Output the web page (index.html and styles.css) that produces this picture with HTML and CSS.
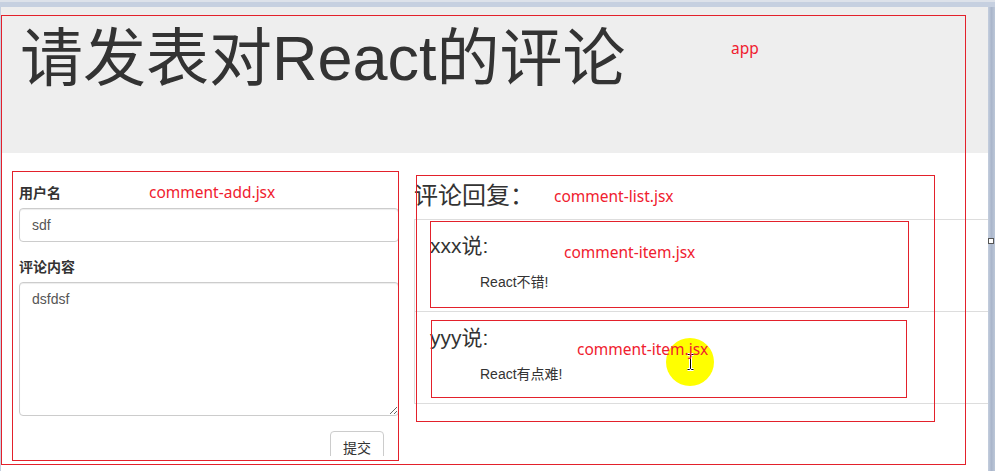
FILE: index.html
```html
<!DOCTYPE html>
<html lang="zh-CN">
<head>
<meta charset="utf-8">
<title>React 评论</title>
<link rel="stylesheet" href="styles.css">
</head>
<body>
  <div class="chrome-top"></div>
  <div class="viewport">
    <div class="page">
      <div class="jumbotron">
        <h1 class="title">请发表对React的评论</h1>
      </div>
      <div class="main">
        <form class="comment-add">
          <div class="form-group">
            <label class="form-label">用户名</label>
            <input class="form-control" type="text" value="sdf">
          </div>
          <div class="form-group">
            <label class="form-label">评论内容</label>
            <textarea class="form-control form-textarea">dsfdsf</textarea>
          </div>
          <div class="form-actions">
            <button class="btn" type="button">提交</button>
          </div>
        </form>
        <div class="comment-list">
          <h3 class="list-title">评论回复：</h3>
          <ul class="list-group">
            <li class="list-group-item">
              <h4 class="item-user">xxx说:</h4>
              <p class="item-text">React不错!</p>
            </li>
            <li class="list-group-item">
              <h4 class="item-user">yyy说:</h4>
              <p class="item-text">React有点难!</p>
            </li>
          </ul>
        </div>
      </div>
    </div>
    <div class="scrollbar"><span class="grip"></span></div>
  </div>

  <div class="annotations">
    <div class="cursor-spot">
      <svg width="9" height="18" viewBox="0 0 9 18">
        <path d="M1.5 1.5h2l1 1 1-1h2M4.5 2.5v13M1.5 16.5h2l1-1 1 1h2" stroke="#fff" stroke-width="3" fill="none"/>
        <path d="M1.5 1.5h2l1 1 1-1h2M4.5 2.5v13M1.5 16.5h2l1-1 1 1h2" stroke="#000" stroke-width="1" fill="none"/>
      </svg>
    </div>
    <div class="anno-box box-app"></div>
    <div class="anno-box box-add"></div>
    <div class="anno-box box-list"></div>
    <div class="anno-box box-item1"></div>
    <div class="anno-box box-item2"></div>
    <span class="anno-label label-app">app</span>
    <span class="anno-label label-add">comment-add.jsx</span>
    <span class="anno-label label-list">comment-list.jsx</span>
    <span class="anno-label label-item1">comment-item.jsx</span>
    <span class="anno-label label-item2">comment-item.jsx</span>
  </div>
</body>
</html>
```

FILE: styles.css
```css
* { box-sizing: border-box; }

html, body {
  margin: 0;
  padding: 0;
}

body {
  width: 995px;
  height: 471px;
  overflow: hidden;
  position: relative;
  background: #c6d0e0;
  font-family: "Liberation Sans", "Noto Sans CJK SC", sans-serif;
  color: #333;
}

.chrome-top {
  height: 7px;
  background: linear-gradient(#dde2ea 0, #dde2ea 2px, #c6d0e0 2px);
}

.viewport {
  display: flex;
  height: 464px;
  padding-left: 1px;
}

.page {
  width: 987px;
  flex-shrink: 0;
  background: #fff;
  overflow: hidden;
}

.jumbotron {
  height: 146px;
  background: #eee;
  padding: 17px 0 0 19px;
}

.title {
  margin: 0;
  font-size: 63px;
  line-height: 1.1;
  font-weight: 400;
  color: #333;
  white-space: nowrap;
}

.main {
  display: flex;
  height: 303px;
  overflow: hidden;
  padding-top: 30px;
}

.comment-add {
  width: 380px;
  flex-shrink: 0;
  margin: 0 0 0 18px;
}

.form-group {
  margin-bottom: 15px;
}

.form-label {
  display: block;
  font-size: 14px;
  line-height: 20px;
  font-weight: bold;
  color: #333;
  margin-bottom: 5px;
}

.form-control {
  display: block;
  width: 100%;
  height: 34px;
  padding: 6px 12px;
  font-family: "Liberation Sans", "Noto Sans CJK SC", sans-serif;
  font-size: 14px;
  line-height: 20px;
  color: #555;
  background: #fff;
  border: 1px solid #ccc;
  border-radius: 4px;
  box-shadow: inset 0 1px 1px rgba(0, 0, 0, .075);
  margin: 0;
}

.form-textarea {
  height: 134px;
}

.form-actions {
  display: flex;
  justify-content: flex-end;
  padding-right: 15px;
}

.btn {
  padding: 6px 12px;
  font-family: "Liberation Sans", "Noto Sans CJK SC", sans-serif;
  font-size: 14px;
  line-height: 20px;
  color: #333;
  background: #fff;
  border: 1px solid #ccc;
  border-radius: 4px;
}

.comment-list {
  flex: 1;
  margin-left: 15px;
  min-width: 0;
}

.list-title {
  margin: 0 0 10px;
  font-size: 24px;
  line-height: 1.1;
  font-weight: 400;
  color: #333;
  white-space: nowrap;
}

.list-group {
  list-style: none;
  margin: 0 -20px 0 0;
  padding: 0;
}

.list-group-item {
  height: 93px;
  margin-bottom: -1px;
  padding: 10px 15px;
  border: 1px solid #ddd;
}

.item-user {
  margin: 4px 0 0;
  font-size: 21px;
  line-height: 23px;
  font-weight: 400;
  color: #333;
}

.item-text {
  margin: 15px 0 0 50px;
  font-size: 14px;
  line-height: 20px;
  color: #333;
}

.scrollbar {
  width: 7px;
  flex-shrink: 0;
  padding-top: 231px;
  background: linear-gradient(to right, #c4cede, #aab6cb 50%, #bcc7d8);
}

.grip {
  display: block;
  width: 6px;
  height: 6px;
  background: #fff;
  border: 1px solid #555;
}

/* annotation overlay */
.annotations {
  position: absolute;
  left: 0;
  top: 0;
  width: 995px;
  height: 471px;
  pointer-events: none;
}

.anno-box {
  position: absolute;
  border: 1px solid #e3212b;
}

.box-app   { left: 1px;   top: 15px;  width: 965px; height: 450px; }
.box-add   { left: 12px;  top: 171px; width: 387px; height: 290px; }
.box-list  { left: 416px; top: 175px; width: 519px; height: 247px; }
.box-item1 { left: 430px; top: 221px; width: 479px; height: 87px; }
.box-item2 { left: 431px; top: 320px; width: 476px; height: 78px; }

.anno-label {
  position: absolute;
  font-family: "Noto Sans", sans-serif;
  font-size: 15.5px;
  line-height: 20px;
  color: #f0202e;
  white-space: nowrap;
}

.label-app   { left: 731px; top: 38px; }
.label-add   { left: 149px; top: 182px; }
.label-list  { left: 554px; top: 186px; }
.label-item1 { left: 564px; top: 242px; }
.label-item2 { left: 577px; top: 339px; }

.cursor-spot {
  position: absolute;
  left: 666px;
  top: 338px;
  width: 48px;
  height: 48px;
  border-radius: 50%;
  background: #ffff00;
  display: flex;
  align-items: center;
  justify-content: center;
}
```
